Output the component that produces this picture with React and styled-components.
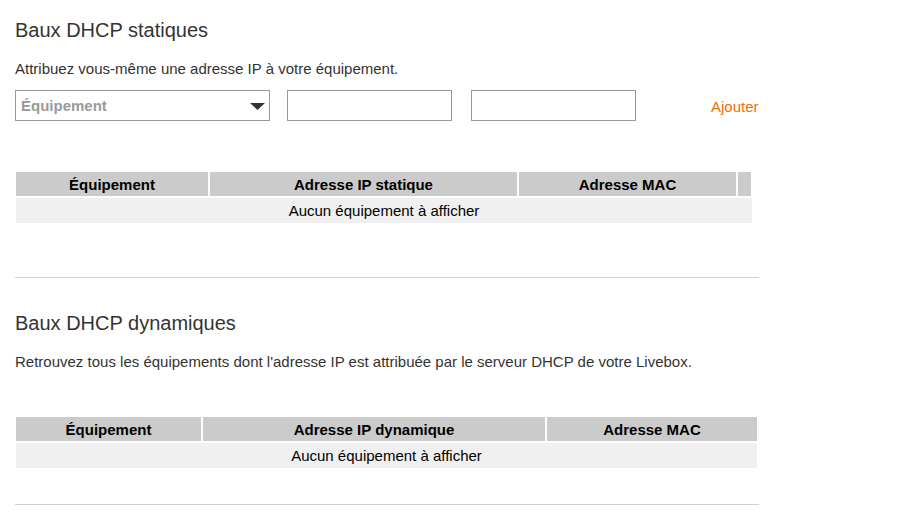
import React from "react";
import styled, { createGlobalStyle } from "styled-components";

const GlobalStyle = createGlobalStyle`
  html, body { margin: 0; padding: 0; background: #fff; }
  body { font-family: "Liberation Sans", Arial, sans-serif; color: #333; }
  * { box-sizing: border-box; }
`;

const Page = styled.div`
  width: 898px;
  padding: 19px 0 0 15px;
`;

const Section = styled.section`
  width: 744px;
  display: flex;
  flex-direction: column;
`;

const Title = styled.h2`
  margin: ${(p) => p.$top || 0}px 0 0;
  font-size: 20px;
  line-height: 23px;
  font-weight: normal;
  color: #333;
`;

const Lead = styled.p`
  margin: 18px 0 0;
  font-size: 15px;
  line-height: 17px;
  color: #333;
`;

const FormRow = styled.div`
  display: flex;
  align-items: flex-start;
  margin-top: 13px;
  height: 31px;
`;

const SelectBox = styled.div`
  position: relative;
  width: 255px;
  height: 31px;
  border: 1px solid #999;
  display: flex;
  align-items: center;
  padding-left: 5px;
  font-size: 15px;
  font-weight: bold;
  color: #999;
`;

const Caret = styled.svg`
  position: absolute;
  right: 4px;
  top: 12px;
`;

const TextField = styled.input`
  width: 165px;
  height: 31px;
  border: 1px solid #999;
  margin-left: ${(p) => p.$gap}px;
  padding: 0 5px;
  font: 15px "Liberation Sans", Arial, sans-serif;
  outline: none;
`;

const AddLink = styled.a`
  margin: 8px 0 0 75px;
  font-size: 15px;
  line-height: 17px;
  color: #f16e00;
  text-decoration: none;
  cursor: pointer;
`;

const Table = styled.div`
  margin-top: ${(p) => p.$top}px;
  margin-left: 1px;
  width: ${(p) => p.$width}px;
  display: flex;
  flex-direction: column;
  gap: 2px;
`;

const HeadRow = styled.div`
  display: grid;
  grid-template-columns: ${(p) => p.$cols};
  column-gap: 2px;
`;

const HeadCell = styled.div`
  height: 24px;
  background: #cbcbcb;
  display: flex;
  align-items: center;
  justify-content: center;
  font-size: 15px;
  line-height: 17px;
  font-weight: bold;
  color: #000;
`;

const EmptyRow = styled.div`
  height: 25px;
  background: #f0f0f0;
  display: flex;
  align-items: center;
  justify-content: center;
  font-size: 15px;
  line-height: 17px;
  color: #000;
`;

const Divider = styled.hr`
  margin: ${(p) => p.$top}px 0 0;
  border: 0;
  border-top: 1px solid #d0d0d0;
  width: 744px;
  height: 0;
`;

function LeaseTable({ top, width, cols, headers }) {
  return (
    <Table $top={top} $width={width}>
      <HeadRow $cols={cols}>
        {headers.map((h, i) => (
          <HeadCell key={i}>{h}</HeadCell>
        ))}
      </HeadRow>
      <EmptyRow>Aucun équipement à afficher</EmptyRow>
    </Table>
  );
}

export default function App() {
  return (
    <>
      <GlobalStyle />
      <Page>
        <Section>
          <Title>Baux DHCP statiques</Title>
          <Lead>Attribuez vous-même une adresse IP à votre équipement.</Lead>
          <FormRow>
            <SelectBox>
              Équipement
              <Caret width="15" height="7" viewBox="0 0 15 7">
                <polygon points="0,0 15,0 7.5,7" fill="#333" />
              </Caret>
            </SelectBox>
            <TextField $gap={17} />
            <TextField $gap={19} />
            <AddLink>Ajouter</AddLink>
          </FormRow>
          <LeaseTable
            top={51}
            width={736}
            cols="192px 307px 217px 13px"
            headers={["Équipement", "Adresse IP statique", "Adresse MAC", ""]}
          />
          <Divider $top={54} />
        </Section>
        <Section>
          <Title $top={34}>Baux DHCP dynamiques</Title>
          <Lead>
            Retrouvez tous les équipements dont l'adresse IP est attribuée par le serveur DHCP de votre Livebox.
          </Lead>
          <LeaseTable
            top={47}
            width={741}
            cols="185px 342px 210px"
            headers={["Équipement", "Adresse IP dynamique", "Adresse MAC"]}
          />
          <Divider $top={36} />
        </Section>
      </Page>
    </>
  );
}
